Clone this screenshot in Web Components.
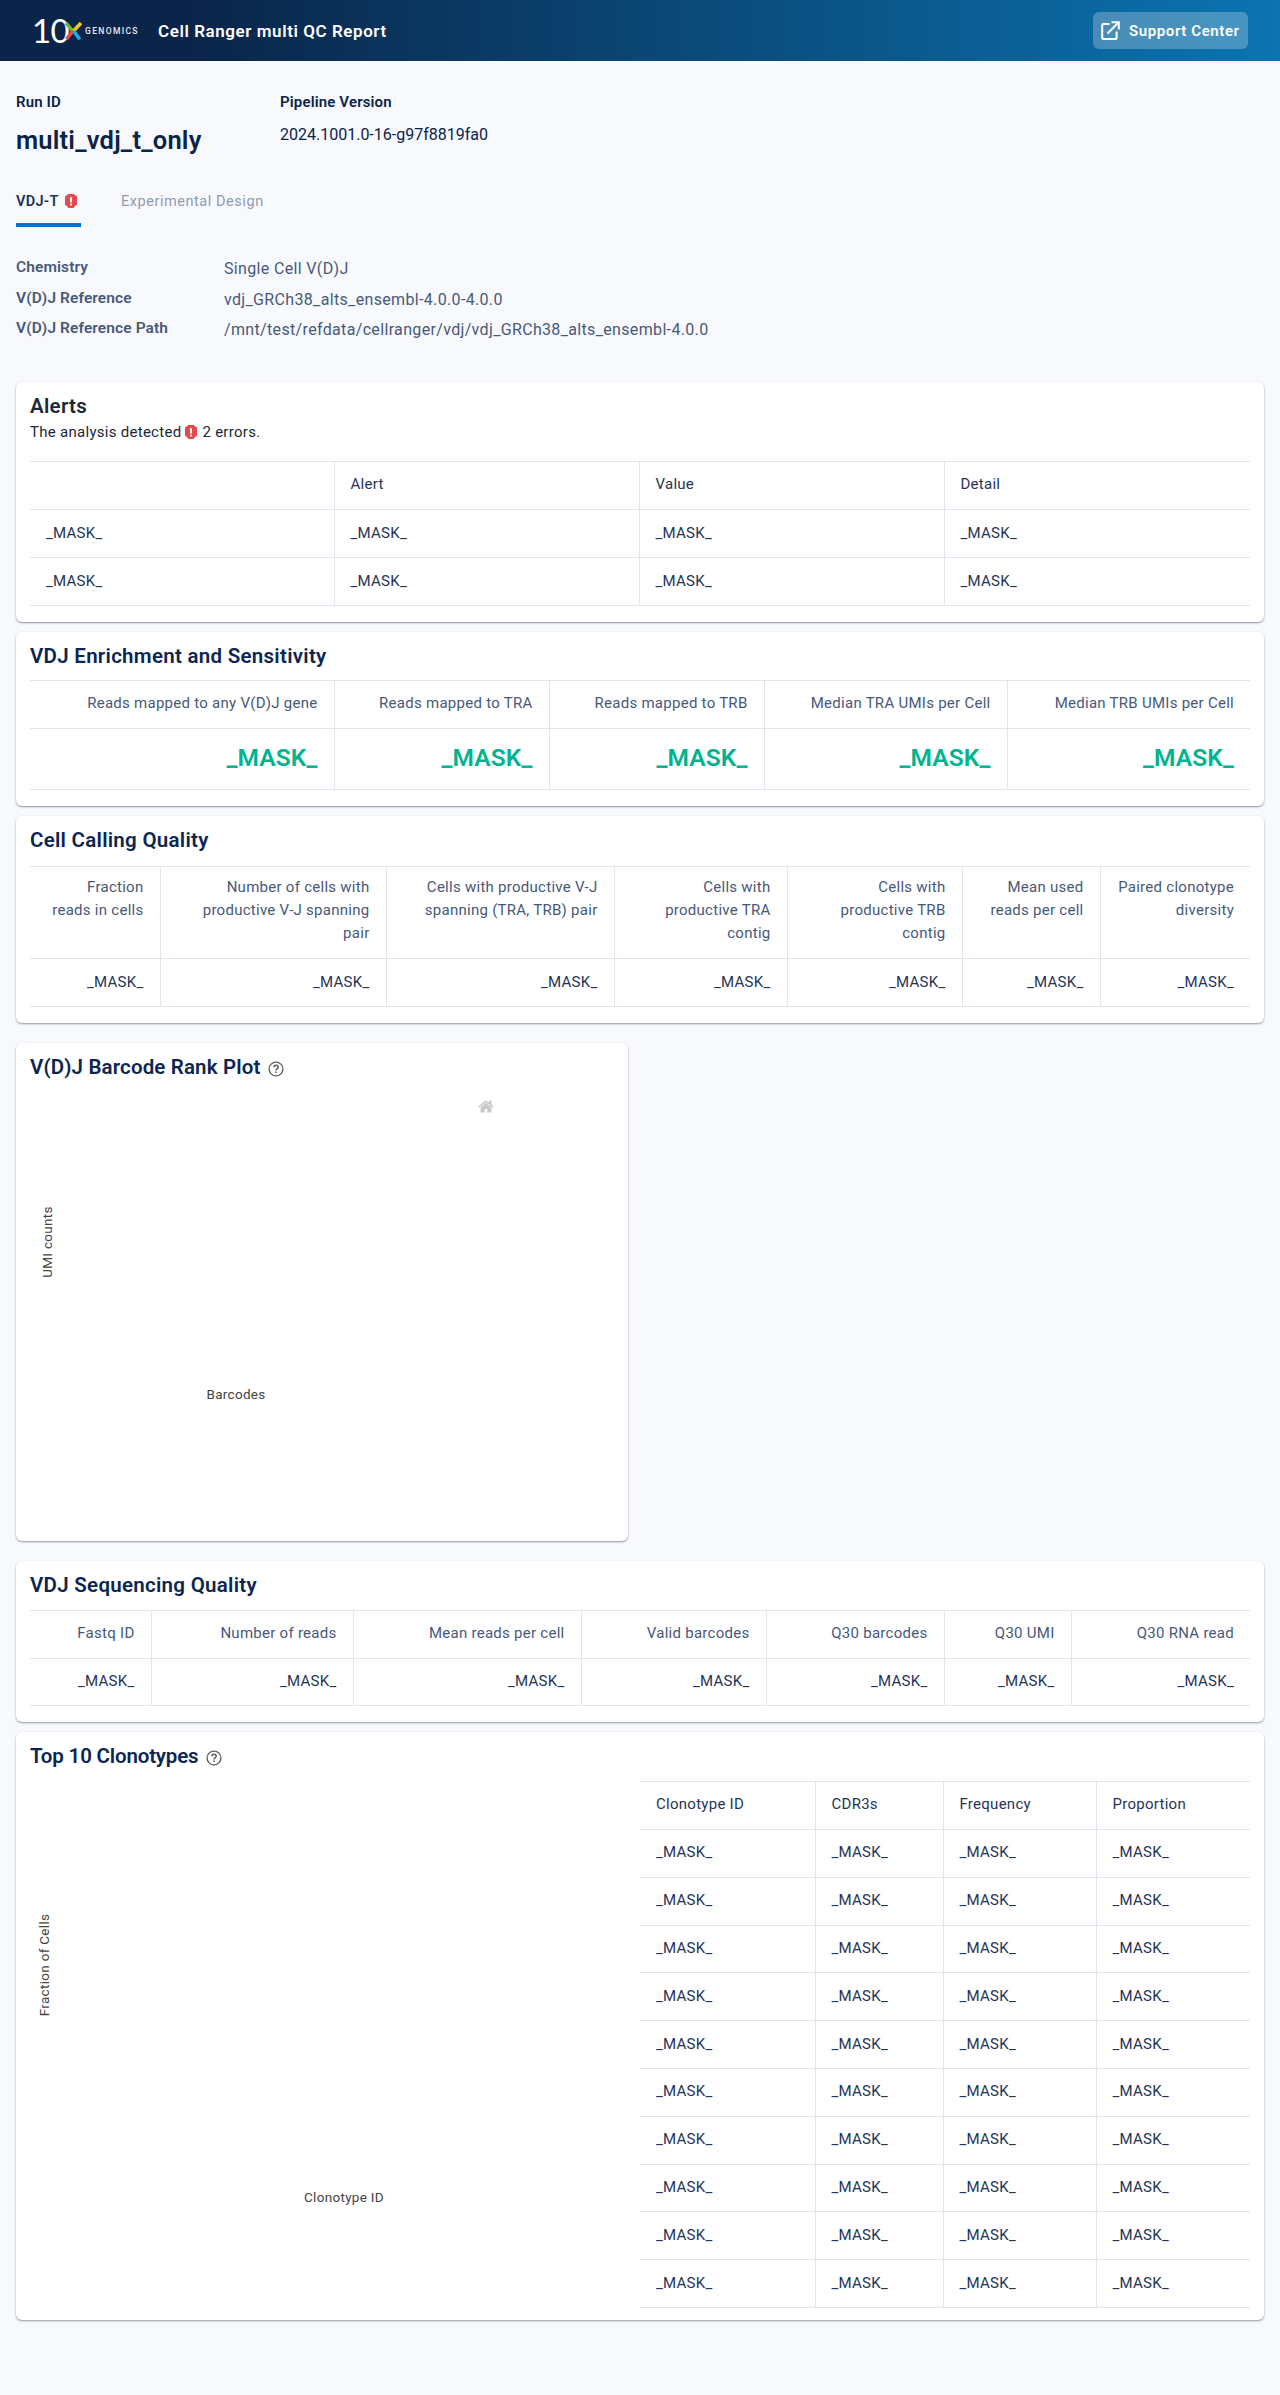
<!DOCTYPE html>
<html lang="en"><head><meta charset="utf-8"><title>Cell Ranger multi QC Report</title>
<style>
html,body{margin:0;padding:0;background:#f8f9fd}
body{font-family:Roboto,"Liberation Sans",sans-serif;color:#0a2348;height:2395px;overflow:hidden}
qc-page{display:block}
</style></head><body>
<qc-page></qc-page>
<template id="shield"><svg width="12" height="14" viewBox="0 0 12 14" style="display:inline-block;vertical-align:-2px"><path d="M3.4 0h5.2L12 2.6v7.6L8.4 14H3.6L0 10.2V2.6z" fill="#e8494f"/><rect x="5" y="3" width="2" height="5.4" rx=".6" fill="#fff"/><rect x="5" y="9.6" width="2" height="2" rx=".6" fill="#fff"/></svg></template>
<template id="help"><svg width="16" height="16" viewBox="0 0 18 18" style="display:block" fill="none" stroke="#5c5c5c"><circle cx="9" cy="9" r="7.8" stroke-width="1.5"/><path d="M6.6 7.1c0-1.4 1-2.2 2.4-2.2s2.5.9 2.5 2.1c0 1.7-2.5 1.9-2.5 3.6" stroke-width="1.7"/><path d="M9 11.9v1.7" stroke-width="1.8"/></svg></template>
<script>
const h = id => document.getElementById(id).innerHTML;
class Base extends HTMLElement{
  render(css,html){ this.attachShadow({mode:'open'}).innerHTML = `<style>${css}</style>${html}`; }
}
class AppHeader extends Base{ connectedCallback(){ this.render(`
:host{display:flex;align-items:center;height:61px;padding:0 32px;box-sizing:border-box;background:linear-gradient(90deg,#0a2549 15%,#0b74b1 100%);color:#fff}
.ten{font:400 33px/33px Lato,sans-serif;letter-spacing:-.6px;width:33px;white-space:nowrap}
svg.x{display:block;margin-right:3px}
.gen{font:500 8.5px/10px Roboto,sans-serif;letter-spacing:1.35px;margin-top:1px;color:#e8edf3;width:50px}
.title{font:600 17px/20px Roboto,sans-serif;margin-left:23px;letter-spacing:.57px;flex:1}
a{display:flex;align-items:center;height:37px;width:155px;box-sizing:border-box;padding:0 8px;background:rgba(255,255,255,.25);border-radius:6px;color:#fff;font:600 15px/20px Roboto,sans-serif;letter-spacing:.6px;text-decoration:none}
a svg{margin-right:9px;flex:none}
`,`<span class="ten">10</span>
<svg class="x" width="17" height="18" viewBox="0 0 17 18" fill="none" stroke-width="3.6"><path d="M1 1l6.6 8" stroke="#6cb33f"/><path d="M16 1L8.6 9" stroke="#f6c619"/><path d="M8 9l-6.4 8" stroke="#e8494f"/><path d="M8.6 9l6.2 8.4" stroke="#1ea7e0"/></svg>
<span class="gen">GENOMICS</span><span class="title"><slot></slot></span>
<a href="#"><svg width="19" height="19" viewBox="0 0 19 19" fill="none" stroke="#fff" stroke-width="2"><path d="M8.5 3H2.2a1 1 0 0 0-1 1v13a1 1 0 0 0 1 1h12.4a1 1 0 0 0 1-1v-6.5"/><path d="M6.5 12.5L17 2"/><path d="M10.5 1.2h7.3v7.3"/></svg>Support Center</a>`);} }
customElements.define('app-header',AppHeader);

class RunSummary extends Base{ connectedCallback(){ this.render(`
:host{display:grid;grid-template-columns:264px 1fr;padding:31px 16px 0;color:#0a2348}
.l{font:600 15px/20px Roboto,sans-serif;letter-spacing:.15px}
.n{font:600 25.5px/34px Roboto,sans-serif;margin-top:11px;letter-spacing:.2px;height:34px}
.v{font:400 16px/24px Roboto,sans-serif;margin-top:11px;letter-spacing:0}
`,`<div><div class="l">Run ID</div><div class="n">multi_vdj_t_only</div></div>
<div><div class="l">Pipeline Version</div><div class="v">2024.1001.0-16-g97f8819fa0</div></div>`);} }
customElements.define('run-summary',RunSummary);

class TabBar extends Base{ connectedCallback(){ this.render(`
:host{display:flex;gap:40px;padding:30px 16px 0}
div{font:400 14.5px/30px Roboto,sans-serif;height:36px;box-sizing:content-box;color:#8e9bb1;letter-spacing:.55px}
.on{font-weight:600;color:#1c3357;border-bottom:4px solid #0071db;width:65px;letter-spacing:.3px}
.on span{display:inline-block;margin-left:6px}
`,`<div class="on">VDJ-T<span>${h('shield')}</span></div><div>Experimental Design</div>`);} }
customElements.define('tab-bar',TabBar);

class InfoList extends Base{ connectedCallback(){ this.render(`
:host{display:grid;grid-template-columns:208px 1fr;grid-auto-rows:30.5px;padding:27px 16px 0;height:128px;box-sizing:content-box;color:#47597a}
.k{font:600 15.5px/26px Roboto,sans-serif;letter-spacing:.1px}
.v{font:400 16px/30px Roboto,sans-serif;letter-spacing:.34px}
`,`<div class="k">Chemistry</div><div class="v">Single Cell V(D)J</div>
<div class="k">V(D)J Reference</div><div class="v">vdj_GRCh38_alts_ensembl-4.0.0-4.0.0</div>
<div class="k">V(D)J Reference Path</div><div class="v">/mnt/test/refdata/cellranger/vdj/vdj_GRCh38_alts_ensembl-4.0.0</div>`);} }
customElements.define('info-list',InfoList);

class QcCard extends Base{ connectedCallback(){
  const head = +this.getAttribute('head') || 48, help = this.hasAttribute('help');
  const dark = this.hasAttribute('dark');
  const ls = this.getAttribute('ls') || '.28px';
  const pb = this.getAttribute('pb') || '16';
  this.render(`
:host{display:block;background:#fff;border-radius:6px;box-shadow:0 1px 2px rgba(20,30,50,.45);padding:0 14px ${pb}px;box-sizing:border-box}
h2{margin:0;font:600 20.5px/24px Roboto,sans-serif;letter-spacing:${ls};color:${dark?'#1d2836':'#0b2650'};padding-top:12px;display:flex;align-items:flex-start;height:${head}px;box-sizing:border-box}
h2 span{display:block;margin:6px 0 0 8px;height:16px}
`,`<h2><slot name="title"></slot>${help?`<span>${h('help')}</span>`:''}</h2><slot></slot>`);
} }
customElements.define('qc-card',QcCard);

class DataTable extends Base{ connectedCallback(){
  const cols = this.getAttribute('cols').split(',').map(Number);
  const heads = this.getAttribute('heads').split('|');
  const rows = +this.getAttribute('rows') || 1;
  const right = this.hasAttribute('right'), big = this.hasAttribute('big');
  const hh = this.getAttribute('hh')||48, rh = this.getAttribute('rh')||48;
  const hc = right ? '#47597a' : '#1f3557';
  let body='';
  for(let r=0;r<rows;r++) body+=`<tr>${cols.map(()=>`<td>_MASK_</td>`).join('')}</tr>`;
  this.render(`
:host{display:block}
table{border-collapse:collapse;table-layout:fixed;width:${cols.reduce((a,b)=>a+b,0)}px;border-top:1px solid #e2e5ed}
th,td{padding:0 16px 2px;border-bottom:1px solid #e2e5ed;border-left:1px solid #e2e5ed;box-sizing:border-box;text-align:${right?'right':'left'};font-size:15px;letter-spacing:.27px}
tr>:first-child{border-left:0}
th{font-weight:400;color:${hc};height:${hh}px;line-height:23px;vertical-align:${this.hasAttribute('top')?'top':'middle'};${this.hasAttribute('top')?'padding-top:9px;':''}}
td{height:${rh}px;color:#1f3557;line-height:20px;${big?'font-size:24.5px;font-weight:600;color:#00b48f;letter-spacing:.1px;':''}}
`,`<table><colgroup>${cols.map(c=>`<col style="width:${c}px">`).join('')}</colgroup>
<thead><tr>${heads.map(t=>`<th>${t}</th>`).join('')}</tr></thead><tbody>${body}</tbody></table>`);
} }
customElements.define('data-table',DataTable);

class PlotArea extends Base{ connectedCallback(){
  const xl=this.getAttribute('xlabel'), yl=this.getAttribute('ylabel');
  const w=+this.getAttribute('w'),ht=+this.getAttribute('ht');
  const xx=+this.getAttribute('xx'),xy=+this.getAttribute('xy'),yx=+this.getAttribute('yx'),yy=+this.getAttribute('yy');
  const home=this.getAttribute('home');
  this.render(`
:host{display:block;position:relative;width:${w}px;height:${ht}px;color:#444;font:400 13.5px/16px Roboto,sans-serif;letter-spacing:.3px}
.x,.y,svg{position:absolute}
.x{left:${xx}px;top:${xy}px;transform:translate(-50%,-50%);white-space:nowrap}
.y{left:${yx}px;top:${yy}px;transform:translate(-50%,-50%) rotate(-90deg);white-space:nowrap}
`,`<span class="x">${xl}</span><span class="y">${yl}</span>${home?`<svg style="left:${home.split(',')[0]}px;top:${home.split(',')[1]}px" width="16" height="17" viewBox="0 0 928.6 1000"><path fill="#c9c9c9" transform="matrix(1 0 0 -1 0 850)" d="m786 296v-267q0-15-11-26t-25-10h-214v214h-143v-214h-214q-15 0-25 10t-11 26v267q0 1 0 2t0 2l321 264 321-264q1-1 1-4z m124 39l-34-41q-5-5-12-6h-2q-7 0-12 3l-386 322-386-322q-7-4-13-4-7 2-12 7l-35 41q-4 5-3 13t6 12l401 334q18 15 42 15t43-15l136-114v109q0 8 5 13t13 5h107q8 0 13-5t5-13v-227l122-102q5-5 6-12t-4-13z"/></svg>`:''}`);
} }
customElements.define('plot-area',PlotArea);

class AlertsNote extends Base{ connectedCallback(){ this.render(`
:host{display:block;font:400 15px/20px Roboto,sans-serif;color:#1d2836;letter-spacing:.28px;height:39px}
span{display:inline-block;margin:0 1px 0 0}
`,`The analysis detected <span>${h('shield')}</span> 2 errors.`);} }
customElements.define('alerts-note',AlertsNote);

class QcPage extends Base{ connectedCallback(){ this.render(`
:host{display:block}
main{display:flex;flex-direction:column;gap:10px;padding:0 16px}
.half{width:612px;margin:10px 0}
.split{display:grid;grid-template-columns:610px 1fr}
.tail{height:75px}
`,`<app-header>Cell Ranger multi QC Report</app-header>
<run-summary></run-summary><tab-bar></tab-bar><info-list></info-list>
<main>
<qc-card head="40" dark><span slot="title">Alerts</span>
 <alerts-note></alerts-note>
 <data-table cols="304,305,305,306" heads="|Alert|Value|Detail" rows="2"></data-table></qc-card>
<qc-card head="48"><span slot="title">VDJ Enrichment and Sensitivity</span>
 <data-table right big cols="304,215,215,243,243" heads="Reads mapped to any V(D)J gene|Reads mapped to TRA|Reads mapped to TRB|Median TRA UMIs per Cell|Median TRB UMIs per Cell" rh="61"></data-table></qc-card>
<qc-card head="50"><span slot="title">Cell Calling Quality</span>
 <data-table right top cols="130,226,228,173,175,138,150" hh="92" rh="48" heads="Fraction reads in cells|Number of cells with productive V-J spanning pair|Cells with productive V-J spanning (TRA, TRB) pair|Cells with productive TRA contig|Cells with productive TRB contig|Mean used reads per cell|Paired clonotype diversity"></data-table></qc-card>
<qc-card class="half" head="56" help ls=".15px" style="height:498px"><span slot="title">V(D)J Barcode Rank Plot</span>
 <plot-area w="584" ht="430" xlabel="Barcodes" ylabel="UMI counts" xx="206" xy="295" yx="17" yy="143" home="448,-1"></plot-area></qc-card>
<qc-card head="49"><span slot="title">VDJ Sequencing Quality</span>
 <data-table right cols="121,202,228,185,178,127,179" heads="Fastq ID|Number of reads|Mean reads per cell|Valid barcodes|Q30 barcodes|Q30 UMI|Q30 RNA read" rh="47"></data-table></qc-card>
<qc-card head="49" help ls="-.17px" pb="0" style="height:588px"><span slot="title">Top 10 Clonotypes</span>
 <div class="split"><plot-area w="610" ht="526" xlabel="Clonotype ID" ylabel="Fraction of Cells" xx="314" xy="416" yx="14" yy="184"></plot-area>
 <data-table cols="175,128,153,154" heads="Clonotype ID|CDR3s|Frequency|Proportion" rows="10" rh="47.8"></data-table></div></qc-card>
</main><div class="tail"></div>`);
} }
customElements.define('qc-page',QcPage);
</script>
</body></html>
